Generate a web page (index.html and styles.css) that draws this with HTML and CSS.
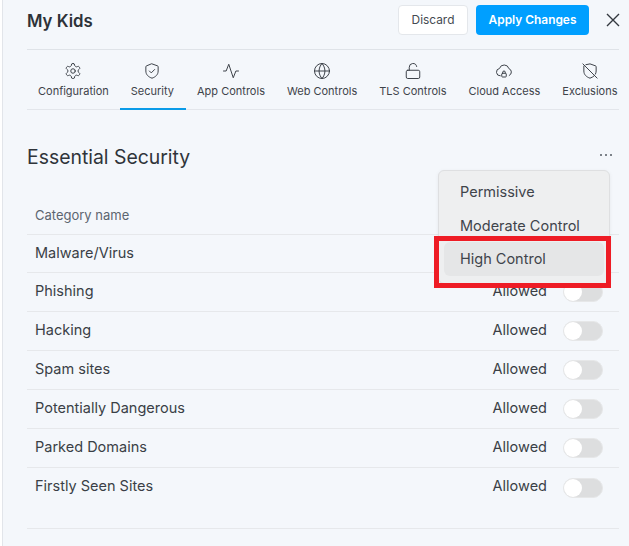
FILE: index.html
```html
<!DOCTYPE html>
<html lang="en">
<head>
<meta charset="utf-8">
<title>My Kids</title>
<link rel="stylesheet" href="styles.css">
</head>
<body>
<div class="panel">
  <header class="top">
    <h1 class="title">My Kids</h1>
    <div class="actions">
      <button class="btn btn-plain">Discard</button>
      <button class="btn btn-primary">Apply Changes</button>
      <svg class="close" viewBox="0 0 14 14" width="14" height="14"><path d="M1 1l12 12M13 1L1 13"/></svg>
    </div>
  </header>
  <nav class="tabs">
    <div class="tab">
      <svg class="ico" viewBox="0 0 24 24"><path d="M12.2 2h-.4a2 2 0 0 0-2 2v.2a2 2 0 0 1-1 1.7l-.4.3a2 2 0 0 1-2 0l-.2-.1a2 2 0 0 0-2.7.7l-.2.4a2 2 0 0 0 .7 2.7l.2.1a2 2 0 0 1 1 1.7v.5a2 2 0 0 1-1 1.8l-.2.1a2 2 0 0 0-.7 2.7l.2.4a2 2 0 0 0 2.7.7l.2-.1a2 2 0 0 1 2 0l.4.3a2 2 0 0 1 1 1.7v.2a2 2 0 0 0 2 2h.4a2 2 0 0 0 2-2v-.2a2 2 0 0 1 1-1.7l.4-.3a2 2 0 0 1 2 0l.2.1a2 2 0 0 0 2.7-.7l.2-.4a2 2 0 0 0-.7-2.7l-.2-.1a2 2 0 0 1-1-1.8v-.5a2 2 0 0 1 1-1.7l.2-.1a2 2 0 0 0 .7-2.7l-.2-.4a2 2 0 0 0-2.7-.7l-.2.1a2 2 0 0 1-2 0l-.4-.3a2 2 0 0 1-1-1.7V4a2 2 0 0 0-2-2z"/><circle cx="12" cy="12" r="3"/></svg>
      <span>Configuration</span>
    </div>
    <div class="tab tab-active">
      <svg class="ico" viewBox="0 0 24 24"><path d="M12 2.500l7.500 2.700a1 1 0 0 1 .7 1V12c0 5-3.600 8-8.200 9.600C7.400 20 3.800 17 3.800 12V6.200a1 1 0 0 1 .7-1z"/><path d="M8.500 12l2.500 2.500 4.500-4.500"/></svg>
      <span>Security</span>
    </div>
    <div class="tab">
      <svg class="ico" viewBox="0 0 24 24"><path d="M2 12h3.500L9 3l6 18 3.500-9H22"/></svg>
      <span>App Controls</span>
    </div>
    <div class="tab">
      <svg class="ico" viewBox="0 0 24 24"><circle cx="12" cy="12" r="10"/><path d="M2 12h20M12 2c-5.300 5.600-5.300 14.400 0 20M12 2c5.300 5.600 5.300 14.400 0 20"/></svg>
      <span>Web Controls</span>
    </div>
    <div class="tab">
      <svg class="ico" viewBox="0 0 24 24"><rect x="3" y="11" width="18" height="11" rx="2"/><path d="M7 11V7a5 5 0 0 1 9.900-1"/></svg>
      <span>TLS Controls</span>
    </div>
    <div class="tab">
      <svg class="ico" viewBox="0 0 24 24"><path d="M7 18.500A5 5 0 0 1 6 8.600a6.500 6.500 0 0 1 12.500.2A5 5 0 0 1 19 18"/><rect x="9" y="15" width="6" height="5" rx="1"/><path d="M10.300 15v-1.300a1.700 1.700 0 0 1 3.400 0V15"/></svg>
      <span>Cloud Access</span>
    </div>
    <div class="tab">
      <svg class="ico" viewBox="0 0 24 24"><path d="M6.500 3.600L12 2.500l7.500 2.700a1 1 0 0 1 .7 1V12c0 1.600-.4 3-1 4.200M17.500 18.500c-1.500 1.300-3.400 2.300-5.500 3.100C7.400 20 3.800 17 3.800 12V5.500"/><path d="M2.500 2.500l19 19"/></svg>
      <span>Exclusions</span>
    </div>
  </nav>

  <section class="content">
    <div class="section-head">
      <h2 class="section-title">Essential Security</h2>
      <span class="dots"><i></i><i></i><i></i></span>
    </div>
    <div class="table">
      <div class="row row-head"><span class="name">Category name</span></div>
      <div class="row row-first"><span class="name">Malware/Virus</span><span class="status">Allowed</span><span class="toggle"></span></div>
      <div class="row"><span class="name">Phishing</span><span class="status">Allowed</span><span class="toggle"></span></div>
      <div class="row"><span class="name">Hacking</span><span class="status">Allowed</span><span class="toggle"></span></div>
      <div class="row"><span class="name">Spam sites</span><span class="status">Allowed</span><span class="toggle"></span></div>
      <div class="row"><span class="name">Potentially Dangerous</span><span class="status">Allowed</span><span class="toggle"></span></div>
      <div class="row"><span class="name">Parked Domains</span><span class="status">Allowed</span><span class="toggle"></span></div>
      <div class="row row-last"><span class="name">Firstly Seen Sites</span><span class="status">Allowed</span><span class="toggle"></span></div>
    </div>
    <div class="foot-line"></div>
  </section>

  <div class="menu">
    <div class="menu-item">Permissive</div>
    <div class="menu-item">Moderate Control</div>
    <div class="menu-item menu-hover">High Control</div>
  </div>
  <div class="callout"></div>
</div>
</body>
</html>
```

FILE: styles.css
```css
* { box-sizing: border-box; }
html, body { margin: 0; height: 100%; }
body {
  background: #fff;
  font-family: Inter, "Liberation Sans", sans-serif;
  color: #3a3f46;
  overflow: hidden;
}
.panel {
  position: relative;
  margin-left: 2px;
  height: 546px;
  padding: 0 10px 0 24px;
  background: #f4f7fb;
  border-left: 1px solid #e2e5ea;
}
.top {
  height: 50px;
  display: flex;
  align-items: center;
  justify-content: space-between;
  border-bottom: 1px solid #dfe3e8;
  padding-bottom: 9px;
}
.title {
  margin: 2px 0 0;
  font-size: 16.800px;
  font-weight: 600;
  color: #2d3238;
}
.actions {
  display: flex;
  align-items: center;
  margin-right: -1px;
}
.btn {
  height: 30px;
  border-radius: 4px;
  font-family: inherit;
  font-size: 11.900px;
  padding: 0 0 2px;
  cursor: pointer;
}
.btn-plain {
  width: 70px;
  background: #fff;
  border: 1px solid #e4e7eb;
  color: #454a51;
  margin-right: 8px;
}
.btn-primary {
  width: 113px;
  background: #009fff;
  border: 0;
  color: #fff;
  font-weight: 600;
  margin-right: 17px;
}
.close {
  fill: none;
  stroke: #33383f;
  stroke-width: 1.400;
  flex: none;
}
.tabs {
  height: 60px;
  display: flex;
  border-bottom: 1px solid #e3e6eb;
}
.tab {
  display: flex;
  flex-direction: column;
  align-items: center;
  padding: 12px 11px 0;
  height: 60px;
  font-size: 11px;
  color: #3e434a;
  white-space: nowrap;
}
.tab-active {
  padding-right: 12px;
  border-bottom: 2px solid #0a9be8;
}
.ico {
  width: 18px;
  height: 18px;
  fill: none;
  stroke: #3a3f46;
  stroke-width: 1.300;
  stroke-linecap: round;
  stroke-linejoin: round;
  margin-bottom: 4px;
}
.content { padding-top: 34px; }
.section-head {
  display: flex;
  align-items: center;
  justify-content: space-between;
  height: 26px;
}
.section-title {
  margin: 0;
  font-size: 19.400px;
  font-weight: 400;
  color: #2f343a;
}
.dots {
  display: flex;
  gap: 2.500px;
  margin: 0 7px 4px 0;
}
.dots i {
  width: 2.500px;
  height: 2.500px;
  border-radius: 50%;
  background: #555b63;
}
.table { margin-top: 27px; }
.row {
  height: 39px;
  display: flex;
  align-items: center;
  padding: 0 16px 0 8px;
  border-bottom: 1px solid #e6e8eb;
  font-size: 14.500px;
}
.row-head {
  height: 38px;
  font-size: 13px;
  color: #5c6570;
}
.row-first { height: 38px; }
.row-last { border-bottom: 0; }
.name { flex: 1; margin-bottom: 4px; }
.status { margin: 0 16px 4px 0; }
.row-first .name, .row-first .status, .row-head .name { margin-bottom: 2px; }
.toggle {
  position: relative;
  width: 40px;
  height: 20px;
  border-radius: 10px;
  background: #dddedf;
  border: 1px solid #e6e7e8;
}
.toggle::before {
  content: "";
  position: absolute;
  left: 0;
  top: 0;
  width: 18px;
  height: 18px;
  border-radius: 50%;
  background: #fff;
}
.foot-line {
  margin-top: 21px;
  border-top: 1px solid #e6e8eb;
}
.menu {
  position: absolute;
  left: 435px;
  top: 170px;
  width: 172px;
  height: 114px;
  padding: 4px 5px;
  background: #eeeff0;
  border: 1px solid #dedfe1;
  border-radius: 6px;
  font-size: 14.500px;
  color: #3f444b;
  box-shadow: 0 1px 4px rgba(0, 0, 0, .06);
}
.menu-item {
  height: 33.500px;
  padding-left: 16px;
  display: flex;
  align-items: center;
  border-radius: 6px;
}
.menu-hover { background: #e5e6e7; }
.callout {
  position: absolute;
  left: 431px;
  top: 236px;
  width: 177px;
  height: 52px;
  border: 5px solid #ee1c25;
}
```
